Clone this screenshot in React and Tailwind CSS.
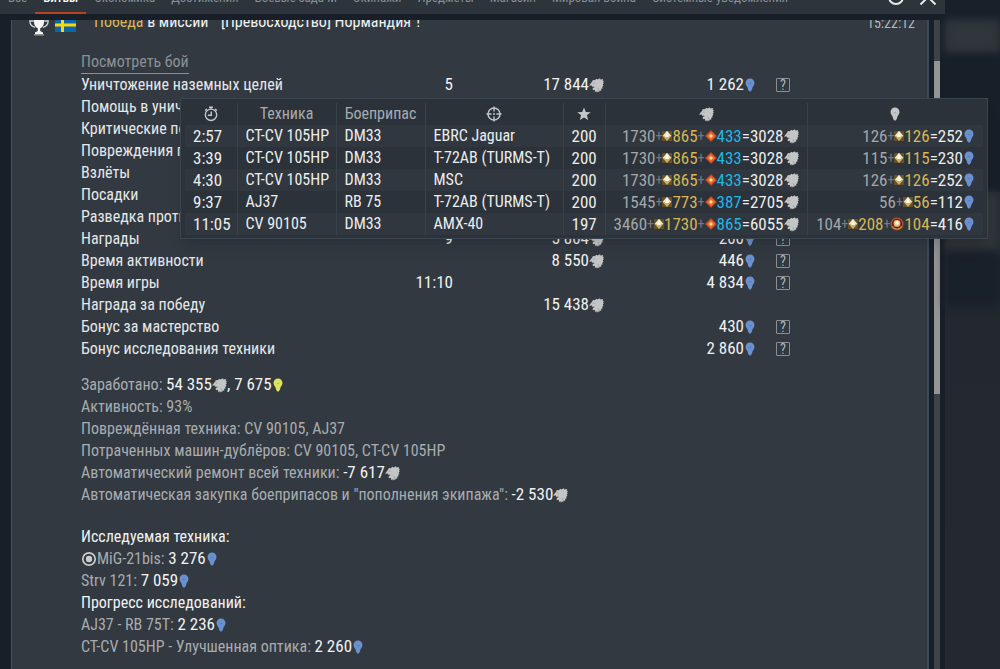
const TABS = [
  'Все',
  'Битвы',
  'Экономика',
  'Достижения',
  'Боевые задачи',
  'Экипажи',
  'Предметы',
  'Магазин',
  'Мировая война',
  'Системные уведомления',
];

const REWARDS = [
  { label: 'Уничтожение наземных целей', count: '5', sl: '17 844', rp: '1 262', help: true },
  { label: 'Помощь в уничтожении противника' },
  { label: 'Критические повреждения противника' },
  { label: 'Повреждения противника' },
  { label: 'Взлёты' },
  { label: 'Посадки' },
  { label: 'Разведка противника' },
  { label: 'Награды', count: '9', sl: '5 804', rp: '200', help: true },
  { label: 'Время активности', sl: '8 550', rp: '446', help: true },
  { label: 'Время игры', count: '11:10', rp: '4 834', help: true },
  { label: 'Награда за победу', sl: '15 438' },
  { label: 'Бонус за мастерство', rp: '430', help: true },
  { label: 'Бонус исследования техники', rp: '2 860', help: true },
];

// sl / rp: [base, premium, bonus, total]
const KILLS = [
  { time: '2:57', unit: 'CT-CV 105HP', ammo: 'DM33', target: 'EBRC Jaguar', score: 200, sl: [1730, 865, 433, 3028], rp: [126, 126, null, 252] },
  { time: '3:39', unit: 'CT-CV 105HP', ammo: 'DM33', target: 'T-72AB (TURMS-T)', score: 200, sl: [1730, 865, 433, 3028], rp: [115, 115, null, 230] },
  { time: '4:30', unit: 'CT-CV 105HP', ammo: 'DM33', target: 'MSC', score: 200, sl: [1730, 865, 433, 3028], rp: [126, 126, null, 252] },
  { time: '9:37', unit: 'AJ37', ammo: 'RB 75', target: 'T-72AB (TURMS-T)', score: 200, sl: [1545, 773, 387, 2705], rp: [56, 56, null, 112] },
  { time: '11:05', unit: 'CV 90105', ammo: 'DM33', target: 'AMX-40', score: 197, sl: [3460, 1730, 865, 6055], rp: [104, 208, 104, 416] },
];

/* ---------- icons ---------- */

function Lion() {
  return (
    <svg viewBox="0 0 14 14" className="inline-block h-[15px] w-[15px] shrink-0 align-[-3px]" fill="#c4c5c5">
      <path d="M.6 6.200 3 3.200l.6-1.400 1.700.4L7 .8l.9.6L10.300.2l.3 1.100 2.600-.3-.5 1.400 1.200.5-.8 1.200.7 1-1 1 .7 1.300-1.200.8.4 1.700-1.400.2.200 1.700-1.500-.1-.6 1.500-1-.9-1 1.500-.6-1.600-1.300 1 .1-2.200-1.100.4-1.300-1 .6-1.200 1.400-.5-.2-.6-2 .1-.7-1 .7-.6L.4 7.400z" />
      <path d="M3.600 4.700 5.200 4.900M8.400 9.500l.9 2" stroke="#7b8085" strokeWidth=".5" fill="none" />
    </svg>
  );
}

function Bulb({ color = '#6b90cf' }) {
  return (
    <svg viewBox="0 0 10 14" className="inline-block h-3.5 w-3 shrink-0 align-[-2px]">
      <path d="M5 .5a4.500 4.500 0 0 1 4.500 4.400c0 2-1.400 2.900-2 4.500L6.800 12 5.600 13.500H4.400L3.200 12l-.7-2.600C1.900 7.800.5 6.900.5 4.900A4.500 4.500 0 0 1 5 .5z" fill={color} />
      <path d="M3.500 5.200c.5.6 1 .6 1.500 0 .5.6 1 .6 1.500 0" stroke="#000" strokeOpacity=".25" strokeWidth=".6" fill="none" />
    </svg>
  );
}

function GoldGem() {
  return (
    <svg viewBox="0 0 10 10" className="inline-block h-2.5 w-2.5 shrink-0">
      <rect width="10" height="10" fill="#66502a" />
      <path d="M5 0 9.400 5 5 10 .6 5z" fill="#cdb06a" />
      <path d="M5 0 9.400 5H.6z" fill="#efe3bd" />
      <path d="M5 .3 7 6H3z" fill="#fffdf0" />
    </svg>
  );
}

function RedGem() {
  return (
    <svg viewBox="0 0 12 12" className="inline-block h-3 w-3 shrink-0">
      <path d="M6 0 12 6 6 12 0 6z" fill="#b8431f" />
      <path d="M6 1.400 10.600 6 6 10.600 1.400 6z" fill="#e56a34" />
      <path d="M6 4 8 6 6 8 4 6z" fill="#f9e08a" />
    </svg>
  );
}

function Medal() {
  return (
    <svg viewBox="0 0 12 12" className="inline-block h-3.5 w-3.5 shrink-0">
      <circle cx="6" cy="6" r="5" fill="#5a2213" stroke="#b5532c" strokeWidth="1.200" />
      <circle cx="6" cy="5.500" r="2.900" fill="#e9b98a" />
      <circle cx="6" cy="5" r="1.600" fill="#fff3da" />
      <path d="M2 8c1.500 3 6.500 3 8 0" stroke="#d98a3c" fill="none" />
    </svg>
  );
}

function Stopwatch() {
  return (
    <svg viewBox="0 0 14 16" className="h-4 w-3.5" fill="none" stroke="#c4c7c9" strokeWidth="1.400">
      <circle cx="7" cy="8.800" r="5.700" />
      <path d="M7.300 5.500V9.200H3.800M7 .8v2.400M5 1.200h4M11.200 3l1.600 1.600M2.800 3 1.200 4.600" />
    </svg>
  );
}

function Crosshair() {
  return (
    <svg viewBox="0 0 16 16" className="h-4 w-4" fill="none" stroke="#c4c7c9" strokeWidth="1.400">
      <circle cx="8" cy="8" r="6" />
      <path d="M8 .5v5M8 10.500v5M.5 8h5M10.500 8h5" />
      <circle cx="8" cy="8" r="1" fill="#c4c7c9" stroke="none" />
    </svg>
  );
}

function Star() {
  return (
    <svg viewBox="0 0 14 14" className="h-3.5 w-3.5" fill="#c4c7c9">
      <path d="m7 .4 1.800 4.600 4.900.2-3.800 3 1.300 4.900L7 10.400l-4.200 2.700 1.300-4.900-3.800-3L5.200 5z" />
    </svg>
  );
}

function Trophy() {
  return (
    <svg viewBox="0 0 20 20" className="h-5 w-5 shrink-0">
      <path d="M5 1h10v5.500c0 3-2 5-3.800 5.700V15l2.800 1.500V18H6v-1.500L8.800 15v-2.800C7 11.500 5 9.500 5 6.500z" fill="#f4f4f4" />
      <path d="M4.800 5H.8c.2 4 2 5.700 5.400 6.300M15.200 5h4c-.2 4-2 5.700-5.400 6.300" fill="none" stroke="#d5d7d8" strokeWidth="1.300" />
      <path d="M5 18.800h10" stroke="#9a9da0" strokeWidth="1.400" />
    </svg>
  );
}

function SwedishFlag() {
  return (
    <svg viewBox="0 0 21 14" className="h-3.5 w-[21px] shrink-0">
      <rect width="21" height="14" fill="#0b67ab" />
      <path d="M6 0h3v14H6zM0 5.500h21v3H0z" fill="#ffd60a" />
    </svg>
  );
}

function Researching() {
  return (
    <svg viewBox="0 0 16 16" className="inline-block h-4 w-4 align-[-3px]">
      <circle cx="8" cy="8" r="6.200" fill="none" stroke="#c9cbcc" strokeWidth="1.700" />
      <circle cx="8" cy="8" r="3.200" fill="#c9cbcc" />
    </svg>
  );
}

/* ---------- small pieces ---------- */

function Num({ children }) {
  return <span className="text-[17px] leading-none text-[#f1f2f2]">{children}</span>;
}

function Plus() {
  return <span className="text-sm leading-none text-[#747a80]">+</span>;
}

function HelpButton() {
  return (
    <button
      type="button"
      aria-label="Подробнее"
      className="flex h-3.5 w-3.5 items-center justify-center rounded-[1px] border border-[#8b9095] text-sm leading-3 text-[#b4b7ba]"
    >
      ?
    </button>
  );
}

function Formula({ values, currency }) {
  const [base, premium, bonus, total] = values;
  return (
    <div className="flex items-center justify-end text-[17px]">
      <span className="text-[#a3a7aa]">{base}</span>
      <Plus />
      <GoldGem />
      <span className="text-[#d8b655]">{premium}</span>
      {bonus && (
        <>
          <Plus />
          {currency === 'sl' ? <RedGem /> : <Medal />}
          <span className={currency === 'sl' ? 'text-[#1fb6e6]' : 'text-[#d8b655]'}>{bonus}</span>
        </>
      )}
      <span>={total}</span>
      {currency === 'sl' ? <Lion /> : <Bulb />}
    </div>
  );
}

function KillsTooltip() {
  return (
    <div
      role="tooltip"
      className="absolute top-[98px] left-[180px] border border-[#3b454f] bg-[#2b323a] px-1 pt-1 pb-[3px] shadow-lg"
    >
      <table className="w-[798px] table-fixed border-collapse text-left whitespace-nowrap text-[#eceded]">
        <colgroup>
          <col className="w-[52px]" />
          <col className="w-[99px]" />
          <col className="w-[89px]" />
          <col className="w-[138px]" />
          <col className="w-[42px]" />
          <col className="w-[202px]" />
          <col />
        </colgroup>
        <thead>
          <tr className="h-[22px] text-[#a7abae] *:border-r *:border-[#38424b] *:p-0 *:font-normal *:last:border-r-0">
            <th aria-label="Время"><div className="flex justify-center"><Stopwatch /></div></th>
            <th className="text-center">Техника</th>
            <th className="text-center">Боеприпас</th>
            <th aria-label="Цель"><div className="flex justify-center"><Crosshair /></div></th>
            <th aria-label="Очки"><div className="flex justify-center"><Star /></div></th>
            <th aria-label="Серебряные львы"><div className="flex justify-center"><Lion /></div></th>
            <th aria-label="Очки исследований"><div className="flex justify-center"><Bulb color="#c4c5c5" /></div></th>
          </tr>
        </thead>
        <tbody>
          {KILLS.map((k) => (
            <tr
              key={k.time}
              className="h-[22px] odd:bg-[#31373e] *:border-r *:border-[#38424b] *:px-2 *:py-0 *:last:border-r-0"
            >
              <td className="text-[17px]">{k.time}</td>
              <td>{k.unit}</td>
              <td>{k.ammo}</td>
              <td>{k.target}</td>
              <td className="text-[17px]">{k.score}</td>
              <td><Formula values={k.sl} currency="sl" /></td>
              <td><Formula values={k.rp} currency="rp" /></td>
            </tr>
          ))}
        </tbody>
      </table>
    </div>
  );
}

export default function App() {
  return (
    <div className="relative flex min-h-screen overflow-hidden bg-[#181f29] font-['Roboto_Condensed','Liberation_Sans',sans-serif] text-base leading-[22px] text-[#a9acaf]">
      <main className="flex min-w-0 flex-1 flex-col">
        <header className="flex h-3.5 items-end justify-between overflow-hidden bg-[#2d343c] pr-[9px]">
          <nav className="flex text-[13px] whitespace-nowrap">
            {TABS.map((tab) => (
              <button
                key={tab}
                type="button"
                className={
                  tab === 'Битвы'
                    ? 'border-b-2 border-[#b8431f] px-2 pb-[3px] font-medium text-white'
                    : 'border-b-2 border-transparent px-2 pb-[3px] text-[#8b9095]'
                }
              >
                {tab}
              </button>
            ))}
          </nav>
          <div className="flex items-end gap-4 pb-[9px]">
            <button type="button" aria-label="Обновить" className="h-4 w-4 rounded-full border-2 border-[#e8e9ea]" />
            <button type="button" aria-label="Закрыть">
              <svg viewBox="0 0 16 16" className="block h-4 w-4" stroke="#e8e9ea" strokeWidth="2">
                <path d="M.5.5l15 15M15.500.5l-15 15" />
              </svg>
            </button>
          </div>
        </header>

        <div className="mt-1.5 flex flex-1">
          <section className="ml-[11px] flex-1 border-r-2 border-l border-r-[#3a4b57] border-l-[#47525b] bg-[#323940] pb-2">
            <div className="flex h-4 items-end justify-between overflow-hidden pr-3 pl-[17px]">
              <div className="flex items-end">
                <Trophy />
                <div className="pb-1 pl-1.5">
                  <SwedishFlag />
                </div>
                <h1 className="pb-[3px] pl-[18px] whitespace-pre text-[#f1f2f2]">
                  <span className="text-[#d9b75a]">Победа</span> в миссии  "[Превосходство] Нормандия"!
                </h1>
              </div>
              <time className="pb-[3px] text-sm text-[#b5b8ba]">15:22:12</time>
            </div>

            <div className="pt-[15px] pl-[69px]">
              <div className="flex">
                <a href="#replay" className="border-b border-[#8b9095] text-[#8b9095]">
                  Посмотреть бой
                </a>
              </div>

              <table className="w-[709px] table-fixed border-collapse text-[#e6e7e8]">
                <colgroup>
                  <col />
                  <col className="w-[72px]" />
                  <col className="w-[151px]" />
                  <col className="w-[152px]" />
                  <col className="w-[34px]" />
                </colgroup>
                <tbody>
                  {REWARDS.map((r) => (
                    <tr key={r.label} className="h-[22px] *:p-0">
                      <td className="whitespace-nowrap">{r.label}</td>
                      <td className="text-right">{r.count && <Num>{r.count}</Num>}</td>
                      <td className="text-right">{r.sl && <><Num>{r.sl}</Num><Lion /></>}</td>
                      <td className="text-right">{r.rp && <><Num>{r.rp}</Num><Bulb /></>}</td>
                      <td><div className="flex justify-end">{r.help && <HelpButton />}</div></td>
                    </tr>
                  ))}
                </tbody>
              </table>

              <div className="mt-3.5">
                <p>Заработано: <Num>54 355</Num><Lion /><Num>, 7 675</Num><Bulb color="#dde35a" /></p>
                <p>Активность: 93%</p>
                <p>Повреждённая техника: CV 90105, AJ37</p>
                <p>Потраченных машин-дублёров: CV 90105, CT-CV 105HP</p>
                <p>Автоматический ремонт всей техники: <Num>-7 617</Num><Lion /></p>
                <p>Автоматическая закупка боеприпасов и "пополнения экипажа": <Num>-2 530</Num><Lion /></p>
              </div>

              <div className="mt-5">
                <h2 className="text-[#f1f2f2]">Исследуемая техника:</h2>
                <p><Researching />MiG-21bis: <Num>3 276</Num><Bulb /></p>
                <p>Strv 121: <Num>7 059</Num><Bulb /></p>
                <h2 className="text-[#f1f2f2]">Прогресс исследований:</h2>
                <p>AJ37 - RB 75T: <Num>2 236</Num><Bulb /></p>
                <p>CT-CV 105HP - Улучшенная оптика: <Num>2 260</Num><Bulb /></p>
              </div>
            </div>
          </section>

          {/* scrollbar */}
          <div className="mr-[5px] ml-[5px] w-1.5 bg-[#3c434b] pt-[41px]">
            <div className="h-[333px] bg-[#959393]" />
          </div>
        </div>
      </main>

      {/* blurred hangar behind the window */}
      <aside className="w-[55px] bg-linear-to-b from-[#1c232b] from-0% via-[#23282f] via-50% to-[#24292f] to-100%">
        <div className="h-5 bg-[#19202a]" />
        <div className="h-8 bg-[#31363c] blur-[4px]" />
        <div className="h-[140px] bg-[#171f29]" />
        <div className="h-[60px] bg-[#30353a] blur-[4px]" />
        <div className="h-[55px] bg-[#18202a] blur-[4px]" />
      </aside>

      <KillsTooltip />
    </div>
  );
}
